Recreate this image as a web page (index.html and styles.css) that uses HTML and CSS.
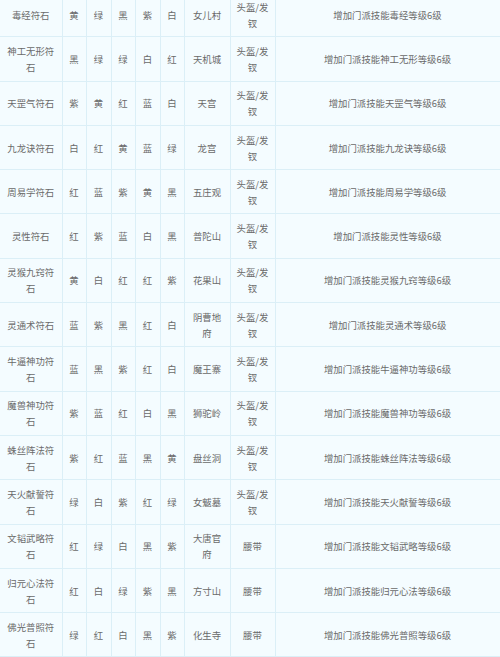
FILE: index.html
```html
<!DOCTYPE html>
<html lang="zh">
<head>
<meta charset="utf-8">
<link rel="stylesheet" href="styles.css">
</head>
<body>
<table class="stones">
<colgroup>
<col class="c-name"><col class="c-a"><col class="c-b"><col class="c-a"><col class="c-b"><col class="c-a"><col class="c-sect"><col class="c-slot"><col class="c-effect">
</colgroup>
<tbody>
<tr><td>毒经符石</td><td>黄</td><td>绿</td><td>黑</td><td>紫</td><td>白</td><td>女儿村</td><td>头盔/发钗</td><td>增加门派技能毒经等级6级</td></tr>
<tr><td>神工无形符石</td><td>黑</td><td>绿</td><td>绿</td><td>白</td><td>红</td><td>天机城</td><td>头盔/发钗</td><td>增加门派技能神工无形等级6级</td></tr>
<tr><td>天罡气符石</td><td>紫</td><td>黄</td><td>红</td><td>蓝</td><td>白</td><td>天宫</td><td>头盔/发钗</td><td>增加门派技能天罡气等级6级</td></tr>
<tr><td>九龙诀符石</td><td>白</td><td>红</td><td>黄</td><td>蓝</td><td>绿</td><td>龙宫</td><td>头盔/发钗</td><td>增加门派技能九龙诀等级6级</td></tr>
<tr><td>周易学符石</td><td>红</td><td>蓝</td><td>紫</td><td>黄</td><td>黑</td><td>五庄观</td><td>头盔/发钗</td><td>增加门派技能周易学等级6级</td></tr>
<tr><td>灵性符石</td><td>红</td><td>紫</td><td>蓝</td><td>白</td><td>黑</td><td>普陀山</td><td>头盔/发钗</td><td>增加门派技能灵性等级6级</td></tr>
<tr><td>灵猴九窍符石</td><td>黄</td><td>白</td><td>红</td><td>红</td><td>紫</td><td>花果山</td><td>头盔/发钗</td><td>增加门派技能灵猴九窍等级6级</td></tr>
<tr><td>灵通术符石</td><td>蓝</td><td>紫</td><td>黑</td><td>红</td><td>白</td><td>阴曹地府</td><td>头盔/发钗</td><td>增加门派技能灵通术等级6级</td></tr>
<tr><td>牛逼神功符石</td><td>蓝</td><td>黑</td><td>紫</td><td>红</td><td>白</td><td>魔王寨</td><td>头盔/发钗</td><td>增加门派技能牛逼神功等级6级</td></tr>
<tr><td>魔兽神功符石</td><td>紫</td><td>蓝</td><td>红</td><td>白</td><td>黑</td><td>狮驼岭</td><td>头盔/发钗</td><td>增加门派技能魔兽神功等级6级</td></tr>
<tr><td>蛛丝阵法符石</td><td>紫</td><td>红</td><td>蓝</td><td>黑</td><td>黄</td><td>盘丝洞</td><td>头盔/发钗</td><td>增加门派技能蛛丝阵法等级6级</td></tr>
<tr><td>天火献誓符石</td><td>绿</td><td>白</td><td>紫</td><td>红</td><td>绿</td><td>女魃墓</td><td>头盔/发钗</td><td>增加门派技能天火献誓等级6级</td></tr>
<tr><td>文韬武略符石</td><td>红</td><td>绿</td><td>白</td><td>黑</td><td>紫</td><td>大唐官府</td><td>腰带</td><td>增加门派技能文韬武略等级6级</td></tr>
<tr><td>归元心法符石</td><td>红</td><td>白</td><td>绿</td><td>紫</td><td>黑</td><td>方寸山</td><td>腰带</td><td>增加门派技能归元心法等级6级</td></tr>
<tr><td>佛光普照符石</td><td>绿</td><td>红</td><td>白</td><td>黑</td><td>紫</td><td>化生寺</td><td>腰带</td><td>增加门派技能佛光普照等级6级</td></tr>
</tbody>
</table>
</body>
</html>
```

FILE: styles.css
```css
html, body {
  margin: 0;
  padding: 0;
  background: #f4fcff;
  overflow: hidden;
}
.stones {
  margin-top: -8px;
  width: 500px;
  table-layout: fixed;
  border-collapse: collapse;
  font-family: "Noto Sans CJK SC", "Noto Sans", sans-serif;
  font-size: 9.4px;
  line-height: 16px;
  color: #6a6a6a;
}
.c-name { width: 62px; }
.c-a { width: 24px; }
.c-b { width: 25px; }
.c-sect { width: 46px; }
.c-slot { width: 45px; }
.c-effect { width: 225px; }
.stones tr { height: 44.3px; }
.stones td {
  border: 1px solid #dbeff7;
  padding: 0 5px;
  text-align: center;
  vertical-align: middle;
  word-break: break-all;
}
.stones td:first-child { border-left: none; }
.stones td:nth-child(2), .stones td:nth-child(3), .stones td:nth-child(4),
.stones td:nth-child(5), .stones td:nth-child(6) { padding: 0; }
```
